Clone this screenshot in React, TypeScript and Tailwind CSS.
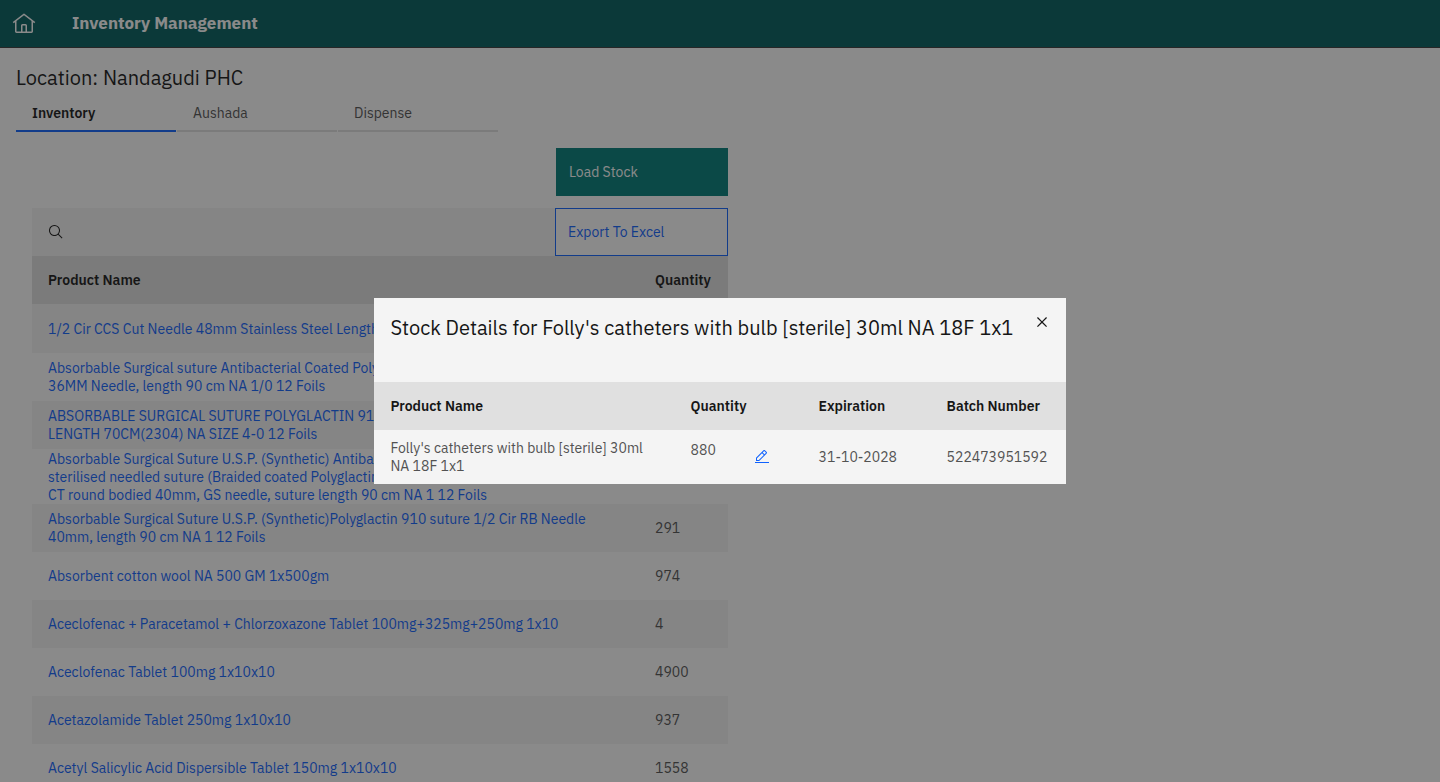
import React from "react";

type Row = { name: string; quantity: string };

const tabs = ["Inventory", "Aushada", "Dispense"];

const rows: Row[] = [
  { name: "1/2 Cir CCS Cut Needle 48mm Stainless Steel Length", quantity: "" },
  {
    name: "Absorbable Surgical suture Antibacterial Coated Poly\n36MM Needle, length 90 cm NA 1/0 12 Foils",
    quantity: "",
  },
  {
    name: "ABSORBABLE SURGICAL SUTURE POLYGLACTIN 910\nLENGTH 70CM(2304) NA SIZE 4-0 12 Foils",
    quantity: "",
  },
  {
    name: "Absorbable Surgical Suture U.S.P. (Synthetic) Antibacterial\nsterilised needled suture (Braided coated Polyglactin\nCT round bodied 40mm, GS needle, suture length 90 cm NA 1 12 Foils",
    quantity: "",
  },
  {
    name: "Absorbable Surgical Suture U.S.P. (Synthetic)Polyglactin 910 suture 1/2 Cir RB Needle\n40mm, length 90 cm NA 1 12 Foils",
    quantity: "291",
  },
  { name: "Absorbent cotton wool NA 500 GM 1x500gm", quantity: "974" },
  { name: "Aceclofenac + Paracetamol + Chlorzoxazone Tablet 100mg+325mg+250mg 1x10", quantity: "4" },
  { name: "Aceclofenac Tablet 100mg 1x10x10", quantity: "4900" },
  { name: "Acetazolamide Tablet 250mg 1x10x10", quantity: "937" },
  { name: "Acetyl Salicylic Acid Dispersible Tablet 150mg 1x10x10", quantity: "1558" },
];

function Icon({ className, children }: { className: string; children: React.ReactNode }) {
  return (
    <svg viewBox="0 0 32 32" fill="currentColor" aria-hidden="true" className={className}>
      {children}
    </svg>
  );
}

function Header() {
  return (
    <header className="flex h-12 items-center border-b border-[#393939] bg-[#005d5d] text-white">
      <a href="#home" aria-label="Home" className="flex size-12 items-center justify-center">
        <Icon className="size-6">
          <path d="M16.6123,2.2138a1.01,1.01,0,0,0-1.2427,0L1,13.4194l1.2427,1.5717L4,13.6209V26a2.0041,2.0041,0,0,0,2,2H26a2.0037,2.0037,0,0,0,2-2V13.63L29.7573,15,31,13.4282ZM18,26H14V18h4Zm2,0V18a2.0023,2.0023,0,0,0-2-2H14a2.002,2.002,0,0,0-2,2v8H6V12.0615l10-7.79,10,7.8005V26Z" />
        </Icon>
      </a>
      <h1 className="ml-6 pb-0.5 text-[17px] leading-5 font-bold">Inventory Management</h1>
    </header>
  );
}

function Tabs() {
  return (
    <div role="tablist" className="flex gap-px">
      {tabs.map((tab, i) => (
        <button
          key={tab}
          type="button"
          role="tab"
          aria-selected={i === 0}
          className={
            i === 0
              ? "h-10 w-40 border-b-2 border-[#0f62fe] px-4 pt-1 text-left font-semibold text-[#161616]"
              : "h-10 w-40 border-b-2 border-[#e0e0e0] px-4 pt-1 text-left text-[#525252]"
          }
        >
          {tab}
        </button>
      ))}
    </div>
  );
}

function InventoryPanel() {
  return (
    <section className="w-1/2 pt-4">
      <div className="flex justify-end">
        <button type="button" className="h-12 w-[172px] border border-[#007d79] bg-[#007d79] px-3 text-left text-white">
          Load Stock
        </button>
      </div>
      <div className="mt-3 flex h-12">
        <label className="flex flex-1 items-center gap-4 bg-[#f4f4f4] px-4 text-[#161616]">
          <Icon className="size-4">
            <path d="M29,27.5859l-7.5521-7.5521a11.0177,11.0177,0,1,0-1.4141,1.4141L27.5859,29ZM4,13a9,9,0,1,1,9,9A9.01,9.01,0,0,1,4,13Z" />
          </Icon>
          <input type="text" aria-label="Search inventory" className="min-w-0 flex-1 bg-transparent outline-none" />
        </label>
        <button type="button" className="w-[173px] border border-[#0f62fe] px-3 text-left text-[#0f62fe]">
          Export To Excel
        </button>
      </div>
      <table className="w-full border-collapse text-left">
        <thead>
          <tr className="h-12 bg-[#e0e0e0] text-[#161616]">
            <th className="px-4 py-0 font-semibold">Product Name</th>
            <th className="w-[89px] px-4 py-0 font-semibold">Quantity</th>
          </tr>
        </thead>
        <tbody>
          {rows.map((row) => (
            <tr key={row.name} className="h-12 first:h-[49px] nth-4:h-[55px] odd:bg-[#f4f4f4]">
              <td className="px-4 py-0 whitespace-pre-line">
                <a href="#stock" className="text-[#0f62fe]">
                  {row.name}
                </a>
              </td>
              <td className="px-4 py-0 text-[#525252]">{row.quantity}</td>
            </tr>
          ))}
        </tbody>
      </table>
    </section>
  );
}

function StockDialog() {
  return (
    <div className="fixed inset-0 flex items-center justify-center bg-[#161616]/50">
      <div role="dialog" aria-modal="true" aria-labelledby="stock-title" className="w-[48%] bg-[#f4f4f4]">
        <div className="flex h-21 items-start justify-between pl-4">
          <h2 id="stock-title" className="pt-4 text-xl leading-7 text-[#161616]">
            Stock Details for Folly's catheters with bulb [sterile] 30ml NA 18F 1x1
          </h2>
          <button type="button" aria-label="Close" className="flex size-12 shrink-0 items-center justify-center text-[#161616]">
            <Icon className="size-5">
              <path d="M24 9.4L22.6 8 16 14.6 9.4 8 8 9.4 14.6 16 8 22.6 9.4 24 16 17.4 22.6 24 24 22.6 17.4 16 24 9.4z" />
            </Icon>
          </button>
        </div>
        <table className="w-full table-fixed border-collapse text-left">
          <thead>
            <tr className="h-12 bg-[#e0e0e0] text-[#161616]">
              <th className="px-4 py-0 font-semibold">Product Name</th>
              <th className="w-32 px-4 py-0 font-semibold">Quantity</th>
              <th className="w-32 px-4 py-0 font-semibold">Expiration</th>
              <th className="w-[135px] px-4 py-0 font-semibold">Batch Number</th>
            </tr>
          </thead>
          <tbody>
            <tr className="h-[54px] text-[#525252]">
              <td className="px-4 py-0">Folly's catheters with bulb [sterile] 30ml NA 18F 1x1</td>
              <td className="px-4 py-0">
                <div className="flex items-start justify-between">
                  <span>880</span>
                  <button type="button" aria-label="Edit quantity" className="flex h-8 w-[50px] items-center justify-center text-[#0f62fe]">
                    <Icon className="size-4">
                      <path d="M2 26H30V28H2zM25.4 9c.8-.8.8-2 0-2.8l-3.6-3.6c-.8-.8-2-.8-2.8 0l-15 15V24h6.4L25.4 9zM20.4 4L24 7.6l-3 3L17.4 7 20.4 4zM6 22v-3.6l10-10 3.6 3.6-10 10H6z" />
                    </Icon>
                  </button>
                </div>
              </td>
              <td className="px-4 py-0">31-10-2028</td>
              <td className="px-4 py-0">522473951592</td>
            </tr>
          </tbody>
        </table>
      </div>
    </div>
  );
}

export default function App() {
  return (
    <div className="h-screen overflow-hidden bg-white font-['IBM_Plex_Sans',Roboto,sans-serif] text-sm leading-[18px]">
      <Header />
      <main className="pt-4">
        <div className="px-4">
          <h2 className="text-xl leading-7 text-[#161616]">Location: Nandagudi PHC</h2>
          <Tabs />
        </div>
        <div className="pr-4 pl-8">
          <InventoryPanel />
        </div>
      </main>
      <StockDialog />
    </div>
  );
}
